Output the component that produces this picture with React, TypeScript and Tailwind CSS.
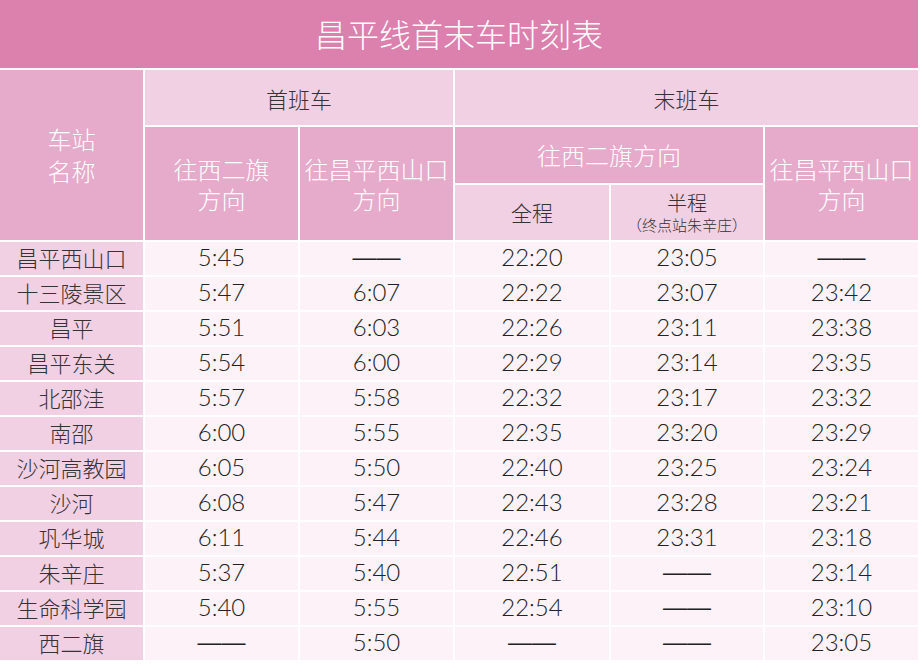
const CJK = '"Noto Sans CJK SC", "Microsoft YaHei", sans-serif'
const NUM = 'Lato, "Noto Sans CJK SC", sans-serif'
const DASH = '"Liberation Sans", sans-serif'

type Row = [string, string, string, string, string, string]

const rows: Row[] = [
  ["昌平西山口", "5:45", "——", "22:20", "23:05", "——"],
  ["十三陵景区", "5:47", "6:07", "22:22", "23:07", "23:42"],
  ["昌平", "5:51", "6:03", "22:26", "23:11", "23:38"],
  ["昌平东关", "5:54", "6:00", "22:29", "23:14", "23:35"],
  ["北邵洼", "5:57", "5:58", "22:32", "23:17", "23:32"],
  ["南邵", "6:00", "5:55", "22:35", "23:20", "23:29"],
  ["沙河高教园", "6:05", "5:50", "22:40", "23:25", "23:24"],
  ["沙河", "6:08", "5:47", "22:43", "23:28", "23:21"],
  ["巩华城", "6:11", "5:44", "22:46", "23:31", "23:18"],
  ["朱辛庄", "5:37", "5:40", "22:51", "——", "23:14"],
  ["生命科学园", "5:40", "5:55", "22:54", "——", "23:10"],
  ["西二旗", "——", "5:50", "——", "——", "23:05"],
]

function TimeCell({ value }: { value: string }) {
  const dash = value === "——"
  return (
    <div className="flex items-center justify-center bg-[#fcf2f7] pb-[3px] text-[24px] leading-none font-light text-[#222]">
      <span style={{ fontFamily: dash ? DASH : NUM }}>{value}</span>
    </div>
  )
}

export default function App() {
  return (
    <div className="w-[922px] h-[672px] bg-white font-light" style={{ fontFamily: CJK }}>
      <div className="w-[918px] bg-white">
        <div className="flex h-[68px] items-center justify-center bg-[#dc80ae] pb-[2px] text-[32px] leading-none text-white">
          昌平线首末车时刻表
        </div>
        <div className="mt-[2px] grid grid-cols-[143px_153px_153px_154px_152px_153px] grid-rows-[55px_56px_55px] gap-[2px]">
          <div className="row-span-3 flex flex-col items-center justify-center gap-[6px] bg-[#e6aacb] text-[24px] leading-[26px] text-white">
            <span>车站</span>
            <span>名称</span>
          </div>
          <div className="col-span-2 flex items-center justify-center bg-[#f2d0e4] text-[22px] leading-none text-[#333]">
            首班车
          </div>
          <div className="col-span-3 flex items-center justify-center bg-[#f2d0e4] text-[22px] leading-none text-[#333]">
            末班车
          </div>
          <div className="row-span-2 flex flex-col items-center justify-center gap-[4px] bg-[#e6aacb] text-[24px] leading-[26px] text-white">
            <span>往西二旗</span>
            <span>方向</span>
          </div>
          <div className="row-span-2 flex flex-col items-center justify-center gap-[4px] bg-[#e6aacb] text-[24px] leading-[26px] text-white">
            <span>往昌平西山口</span>
            <span>方向</span>
          </div>
          <div className="col-span-2 flex items-center justify-center bg-[#e6aacb] text-[24px] leading-none text-white">
            往西二旗方向
          </div>
          <div className="row-span-2 flex flex-col items-center justify-center gap-[4px] bg-[#e6aacb] text-[24px] leading-[26px] text-white">
            <span>往昌平西山口</span>
            <span>方向</span>
          </div>
          <div className="flex items-center justify-center bg-[#f2d0e4] text-[21px] leading-none text-[#333]">
            全程
          </div>
          <div className="flex flex-col items-center justify-center gap-[2px] bg-[#f2d0e4] text-[#333]">
            <span className="text-[20px] leading-[22px]">半程</span>
            <span className="text-[15px] leading-[17px]">（终点站朱辛庄）</span>
          </div>
        </div>
        <div className="mt-[2px] grid grid-cols-[143px_153px_153px_154px_152px_153px] auto-rows-[33px] gap-[2px]">
          {rows.map(([station, ...times]) => (
            <div key={station} className="contents">
              <div className="flex items-center justify-center bg-[#f2d0e4] pb-[3px] text-[22px] leading-none text-[#333]">
                {station}
              </div>
              {times.map((t, i) => (
                <TimeCell key={i} value={t} />
              ))}
            </div>
          ))}
        </div>
      </div>
    </div>
  )
}
